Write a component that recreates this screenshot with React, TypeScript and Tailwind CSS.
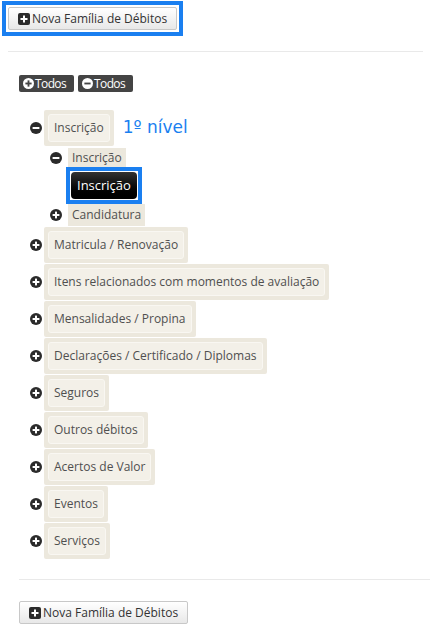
import type { ReactNode } from 'react';

const font = { fontFamily: '"Open Sans", "Liberation Sans", sans-serif' };

const CircleIcon = ({ minus = false, size = 12 }: { minus?: boolean; size?: number }) => (
  <svg width={size} height={size} viewBox="0 0 12 12" className="shrink-0">
    <circle cx="6" cy="6" r="6" fill="#2b2b2b" />
    <rect x="2.6" y="5" width="6.8" height="2" fill="#fff" />
    {!minus && <rect x="5" y="2.6" width="2" height="6.8" fill="#fff" />}
  </svg>
);

const SquarePlus = () => (
  <svg width="12" height="12" viewBox="0 0 12 12" className="shrink-0">
    <rect x="0" y="0" width="12" height="12" rx="2" fill="#2b2b2b" />
    <rect x="2.5" y="5" width="7" height="2" fill="#fff" />
    <rect x="5" y="2.5" width="2" height="7" fill="#fff" />
  </svg>
);

const NewFamilyButton = () => (
  <button className="flex items-center gap-[2px] h-[23px] w-[169px] px-[9px] rounded-[2px] border border-[#c8c8c8] bg-gradient-to-b from-white to-[#e8e8e8] text-[12px] text-[#333] whitespace-nowrap">
    <SquarePlus />
    <span>Nova Família de Débitos</span>
  </button>
);

const Box = ({ children }: { children: ReactNode }) => (
  <div className="bg-[#ece8dd] p-[4px] rounded-[2px]">
    <div className="h-[28px] flex items-center px-[5px] bg-[#f3f0e8] border border-[#f9f7f2] rounded-[3px] text-[12px] text-[#4f4f4f] whitespace-nowrap">
      {children}
    </div>
  </div>
);

const TopItem = ({ label, open = false, extra }: { label: string; open?: boolean; extra?: ReactNode }) => (
  <div className="flex items-center gap-[2px] pl-[11px] h-[36px]">
    <CircleIcon minus={open} />
    <Box>{label}</Box>
    {extra}
  </div>
);

const items = [
  'Matricula / Renovação',
  'Itens relacionados com momentos de avaliação',
  'Mensalidades / Propina',
  'Declarações / Certificado / Diplomas',
  'Seguros',
  'Outros débitos',
  'Acertos de Valor',
  'Eventos',
  'Serviços',
];

export default function App() {
  return (
    <div className="w-[430px] h-[633px] bg-white overflow-hidden" style={font}>
      <div className="pt-[1px] pl-[2px] pr-[7px]">
        <div className="inline-block border-4 border-[#1a7ff0] p-[2px]">
          <NewFamilyButton />
        </div>
        <div className="ml-[6px] mt-[15px] border-t border-[#e9e9e9]" />
      </div>

      <div className="pl-[19px]">
        <div className="mt-[23px] flex gap-[4px]">
          {[false, true].map((minus) => (
            <button
              key={String(minus)}
              className="flex items-center gap-[1px] h-[17px] w-[55px] px-[4px] rounded-[2px] bg-[#444] text-white text-[12px] tracking-[-0.6px]"
            >
              <svg width="11" height="11" viewBox="0 0 12 12" className="shrink-0">
                <circle cx="6" cy="6" r="6" fill="#fff" />
                <rect x="2.6" y="5" width="6.8" height="2" fill="#444" />
                {!minus && <rect x="5" y="2.6" width="2" height="6.8" fill="#444" />}
              </svg>
              <span>Todos</span>
            </button>
          ))}
        </div>

        <div className="mt-[18px] flex flex-col gap-[1px]">
          <TopItem
            label="Inscrição"
            open
            extra={
              <span
                className="ml-[7px] text-[17px] text-[#1a7ff0]"
                style={{ fontFamily: '"DejaVu Sans", Verdana, sans-serif' }}
              >
                1º nível
              </span>
            }
          />

          <div className="pl-[31px] pt-[1px] flex flex-col">
            <div className="flex items-center gap-[6px] h-[19px]">
              <CircleIcon minus />
              <span className="h-[19px] flex items-center bg-[#ece8dd] px-[4px] text-[12px] text-[#4f4f4f]">
                Inscrição
              </span>
            </div>
            <div className="pl-[16px]">
              <div className="inline-block border-4 border-[#1a7ff0] p-[1px]">
                <button className="block h-[27px] px-[6px] rounded-[4px] bg-gradient-to-b from-[#333] to-black text-white text-[13px]">
                  Inscrição
                </button>
              </div>
            </div>
            <div className="flex items-center gap-[6px] h-[22px]">
              <CircleIcon />
              <span className="h-[22px] flex items-center bg-[#ece8dd] px-[4px] text-[12px] text-[#4f4f4f]">
                Candidatura
              </span>
            </div>
          </div>

          {items.map((label) => (
            <TopItem key={label} label={label} />
          ))}
        </div>

        <div className="mt-[20px] border-t border-[#e9e9e9]" />
        <div className="mt-[21px]">
          <NewFamilyButton />
        </div>
      </div>
    </div>
  );
}
